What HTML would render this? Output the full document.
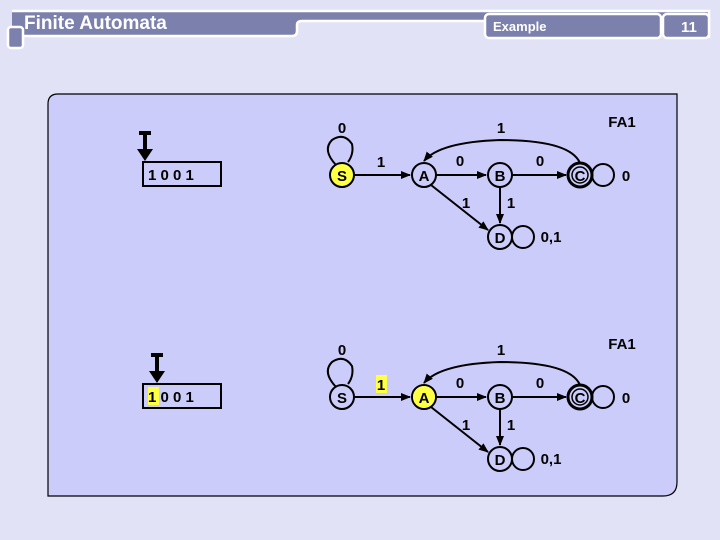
<!DOCTYPE html>
<html><head><meta charset="utf-8"><style>
body{margin:0;background:#e2e2f6;}
svg{display:block}
text{font-family:"Liberation Sans",Arial,sans-serif;font-weight:bold;}
</style></head><body>
<svg width="720" height="540" viewBox="0 0 720 540" xmlns="http://www.w3.org/2000/svg">
<rect width="720" height="540" fill="#e2e2f6"/>
<!-- header -->
<path d="M12 11 H709 V38 H663 V20 H300 Q298 20 298 24 V31 Q298 35 294 35 H12 Z" fill="#7b80ac"/>
<path d="M12 11 H709 V38" fill="none" stroke="#fff" stroke-width="2.5"/>
<path d="M12 36 H292 Q297 36 297 31 V25 Q297 21 302 21 H486" fill="none" stroke="#fff" stroke-width="2.5"/>
<rect x="485" y="14" width="176" height="24" rx="4" fill="#7b80ac" stroke="#fff" stroke-width="2.5"/>
<rect x="663" y="14" width="46" height="24" rx="4" fill="#7b80ac" stroke="#fff" stroke-width="2.5"/>
<rect x="8" y="27" width="15" height="21" rx="3" fill="#7b80ac" stroke="#fff" stroke-width="2.5"/>
<text x="24" y="29" font-size="19" fill="#fff">Finite Automata</text>
<text x="493" y="31" font-size="13" fill="#fff">Example</text>
<text x="681" y="32" font-size="15" fill="#fff">11</text>
<!-- panel -->
<path d="M58 94 H677 V482 Q677 496 663 496 H48 V104 Q48 94 58 94 Z" fill="#ccccfa" stroke="#000" stroke-width="1.2"/>
<defs>
<marker id="ar" markerWidth="10" markerHeight="8" refX="9" refY="4" orient="auto" markerUnits="userSpaceOnUse"><path d="M0 0 L10 4 L0 8 Z" fill="#000"/></marker>
<g id="fa">
<g fill="none" stroke="#000" stroke-width="2">
<path d="M336 165 Q322 150 332 140 Q344 132 352 144 Q354 154 348 162" />
<line x1="354" y1="175" x2="410" y2="175" marker-end="url(#ar)"/>
<line x1="436" y1="175" x2="486" y2="175" marker-end="url(#ar)"/>
<line x1="512" y1="175" x2="566" y2="175" marker-end="url(#ar)"/>
<line x1="500" y1="187" x2="500" y2="223" marker-end="url(#ar)"/>
<line x1="431" y1="185" x2="488" y2="230" marker-end="url(#ar)"/>
<path d="M580 163 Q570 140 500 140 Q440 142 424 161" marker-end="url(#ar)"/>
<circle cx="603" cy="175" r="11"/>
<circle cx="523" cy="237" r="11"/>
</g>
<circle cx="424" cy="175" r="12" fill="none" stroke="#000" stroke-width="2"/>
<circle cx="500" cy="175" r="12" fill="none" stroke="#000" stroke-width="2"/>
<circle cx="500" cy="237" r="12" fill="none" stroke="#000" stroke-width="2"/>
<circle cx="580" cy="175" r="12" fill="none" stroke="#000" stroke-width="3"/>
<circle cx="580" cy="175" r="8" fill="none" stroke="#000" stroke-width="1.5"/>
<g font-size="15" fill="#000" text-anchor="middle">
<text x="424" y="181">A</text><text x="500" y="181">B</text><text x="580" y="181">C</text><text x="500" y="243">D</text>
<text x="342" y="133">0</text><text x="460" y="166">0</text><text x="540" y="166">0</text>
<text x="501" y="133">1</text><text x="626" y="181">0</text><text x="466" y="208">1</text><text x="511" y="208">1</text>
<text x="551" y="242">0,1</text><text x="622" y="127">FA1</text>
</g>
</g>
</defs>
<use href="#fa"/>
<circle cx="342" cy="175" r="12" fill="#ffff44" stroke="#000" stroke-width="2"/>
<text x="342" y="181" font-size="15" text-anchor="middle">S</text>
<text x="381" y="167" font-size="15" text-anchor="middle">1</text>
<rect x="139" y="131" width="12" height="4" fill="#000"/><rect x="143" y="131" width="4" height="20" fill="#000"/>
<path d="M137 149 H153 L145 161 Z" fill="#000"/>
<rect x="143" y="162" width="78" height="24" fill="none" stroke="#000" stroke-width="2"/>
<text x="148" y="180" font-size="15">1 0 0 1</text>
<use href="#fa" y="222"/>
<circle cx="342" cy="397" r="12" fill="none" stroke="#000" stroke-width="2"/>
<text x="342" y="403" font-size="15" text-anchor="middle">S</text>
<rect x="376" y="375" width="11" height="18" fill="#ffff44"/>
<text x="381" y="390" font-size="15" text-anchor="middle">1</text>
<circle cx="424" cy="397" r="11" fill="#ffff44"/>
<text x="424" y="403" font-size="15" text-anchor="middle">A</text>
<rect x="151" y="353" width="12" height="4" fill="#000"/><rect x="155" y="353" width="4" height="20" fill="#000"/>
<path d="M149 371 H165 L157 383 Z" fill="#000"/>
<rect x="143" y="384" width="78" height="24" fill="none" stroke="#000" stroke-width="2"/>
<rect x="148" y="387" width="11" height="18" fill="#ffff44"/>
<text x="148" y="402" font-size="15">1 0 0 1</text>
</svg>
</body></html>
